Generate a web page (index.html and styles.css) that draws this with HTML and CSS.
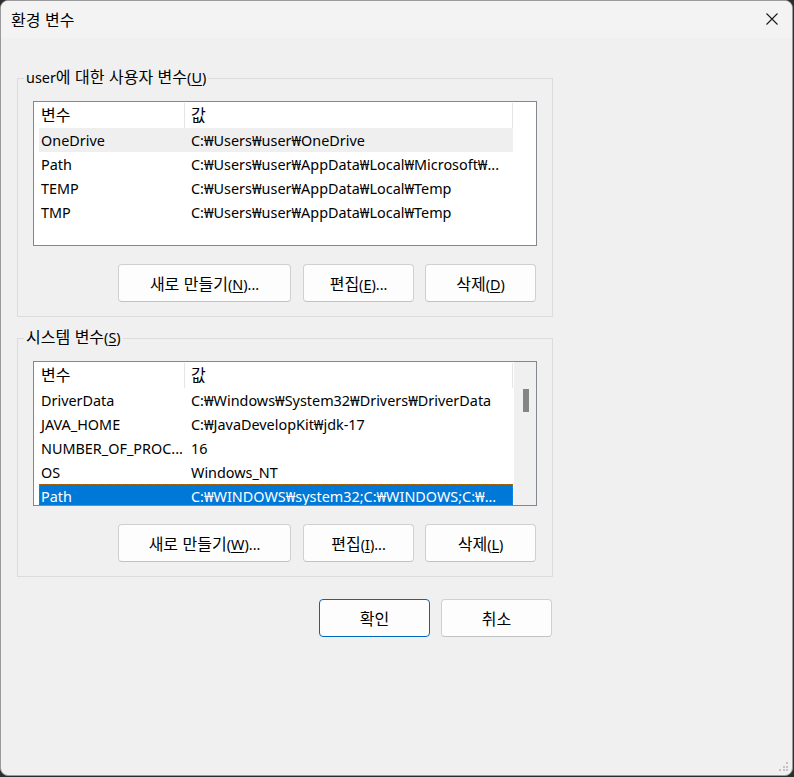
FILE: index.html
```html
<!DOCTYPE html>
<html lang="ko">

<head>
    <meta charset="UTF-8">
    <meta name="viewport" content="width=device-width, initial-scale=1.0">
    <title>환경 변수</title>
    <link rel="stylesheet" href="styles.css">
</head>

<body>
    <div class="window">
        <div class="titlebar">
            <span class="title ko">환경 변수</span>
            <svg class="close-icon" width="12" height="12" viewBox="0 0 12 12">
                <path d="M0.5 0.5 L11.5 11.5 M11.5 0.5 L0.5 11.5" stroke="#1a1a1a" stroke-width="1.1" fill="none" />
            </svg>
        </div>

        <div class="content">
            <fieldset class="group">
                <legend>user<span class="ko">에 대한 사용자 변수</span>(<u>U</u>)</legend>
                <div class="listview">
                    <div class="lv-main">
                        <div class="lv-header">
                            <div class="lv-cell ko">변수</div>
                            <div class="lv-cell ko">값</div>
                        </div>
                        <div class="lv-row hover">
                            <div class="lv-cell">OneDrive</div>
                            <div class="lv-cell">C:₩Users₩user₩OneDrive</div>
                        </div>
                        <div class="lv-row">
                            <div class="lv-cell">Path</div>
                            <div class="lv-cell">C:₩Users₩user₩AppData₩Local₩Microsoft₩...</div>
                        </div>
                        <div class="lv-row">
                            <div class="lv-cell">TEMP</div>
                            <div class="lv-cell">C:₩Users₩user₩AppData₩Local₩Temp</div>
                        </div>
                        <div class="lv-row">
                            <div class="lv-cell">TMP</div>
                            <div class="lv-cell">C:₩Users₩user₩AppData₩Local₩Temp</div>
                        </div>
                    </div>
                </div>
                <div class="btn-row">
                    <button class="btn btn-wide"><span class="ko">새로 만들기</span>(<u>N</u>)...</button>
                    <button class="btn"><span class="ko">편집</span>(<u>E</u>)...</button>
                    <button class="btn"><span class="ko">삭제</span>(<u>D</u>)</button>
                </div>
            </fieldset>

            <fieldset class="group">
                <legend><span class="ko">시스템 변수</span>(<u>S</u>)</legend>
                <div class="listview">
                    <div class="lv-main">
                        <div class="lv-header">
                            <div class="lv-cell ko">변수</div>
                            <div class="lv-cell ko">값</div>
                        </div>
                        <div class="lv-row">
                            <div class="lv-cell">DriverData</div>
                            <div class="lv-cell">C:₩Windows₩System32₩Drivers₩DriverData</div>
                        </div>
                        <div class="lv-row">
                            <div class="lv-cell">JAVA_HOME</div>
                            <div class="lv-cell">C:₩JavaDevelopKit₩jdk-17</div>
                        </div>
                        <div class="lv-row">
                            <div class="lv-cell">NUMBER_OF_PROC...</div>
                            <div class="lv-cell">16</div>
                        </div>
                        <div class="lv-row">
                            <div class="lv-cell">OS</div>
                            <div class="lv-cell">Windows_NT</div>
                        </div>
                        <div class="lv-row selected">
                            <div class="lv-cell">Path</div>
                            <div class="lv-cell">C:₩WINDOWS₩system32;C:₩WINDOWS;C:₩...</div>
                        </div>
                    </div>
                    <div class="scrollbar">
                        <div class="thumb"></div>
                    </div>
                </div>
                <div class="btn-row">
                    <button class="btn btn-wide"><span class="ko">새로 만들기</span>(<u>W</u>)...</button>
                    <button class="btn"><span class="ko">편집</span>(<u>I</u>)...</button>
                    <button class="btn"><span class="ko">삭제</span>(<u>L</u>)</button>
                </div>
            </fieldset>

            <div class="dialog-buttons">
                <button class="btn btn-default"><span class="ko">확인</span></button>
                <button class="btn"><span class="ko">취소</span></button>
            </div>
        </div>

        <div class="grip">
            <span></span><span></span><span></span><span></span><span></span><span></span>
        </div>
    </div>
</body>

</html>
```

FILE: styles.css
```css
html {
    background-color: #2d2d2d;
}

body {
    margin: 0;
    font-family: "Noto Sans", "Noto Sans CJK KR", sans-serif;
    font-size: 14.4px;
    color: #000;
}

.ko {
    font-family: "Noto Sans CJK KR", sans-serif;
    font-size: 16px;
}

.window {
    position: relative;
    width: 793px;
    height: 776px;
    box-sizing: border-box;
    background-color: #f0f0f0;
    border: 1px solid #9a9a9a;
    border-radius: 8px;
    overflow: hidden;
}

.titlebar {
    height: 37px;
    background-color: #f3f3f3;
    display: flex;
    align-items: center;
    justify-content: space-between;
    padding: 0 14px 0 10px;
}

.title {
    line-height: 20px;
    margin-top: -2px;
}

.close-icon {
    margin-top: -1px;
}

.content {
    padding: 30px 0 0 16px;
}

.group {
    margin: 0 0 11px 0;
    padding: 0 15px 14px;
    width: 536px;
    box-sizing: border-box;
    border: 1px solid #dcdcdc;
    min-width: 0;
}

.group legend {
    margin-left: -9px;
    padding: 0 2px;
    height: 20px;
    line-height: 20px;
    white-space: nowrap;
}

.group legend .ko {
    line-height: 1;
}

u {
    text-decoration-thickness: 1px;
    text-underline-offset: 2px;
}

/* list view */
.listview {
    margin-top: 13px;
    width: 504px;
    height: 145px;
    box-sizing: border-box;
    border: 1px solid #828790;
    background-color: #fff;
    display: flex;
    overflow: hidden;
}

.lv-main {
    padding-left: 5px;
}

.lv-header,
.lv-row {
    display: grid;
    grid-template-columns: 146px 328px;
    white-space: nowrap;
}

.lv-header {
    height: 26px;
}

.lv-header .lv-cell {
    border-right: 1px solid #e5e5e5;
    margin: 1px 0 0;
    line-height: 22px;
}

.lv-row {
    height: 24px;
    line-height: 25px;
}

.lv-cell {
    overflow: hidden;
    padding-left: 2px;
}

.lv-cell + .lv-cell {
    padding-left: 6px;
}

.lv-row.hover {
    background-color: #efefef;
}

.lv-row.selected {
    background-color: #0078d7;
    color: #fff;
    outline: 1px dotted #b06a10;
    outline-offset: -1px;
}

.scrollbar {
    margin-left: 1px;
    width: 22px;
    background-color: #f0f0f0;
    padding-top: 27px;
    display: flex;
    justify-content: center;
}

.thumb {
    width: 6px;
    height: 23px;
    margin-left: 1px;
    background-color: #858585;
}

/* buttons */
.btn-row {
    margin-top: 18px;
    width: 503px;
    display: flex;
    justify-content: flex-end;
    gap: 11px;
}

.btn {
    width: 111px;
    height: 38px;
    font-family: inherit;
    font-size: 14.4px;
    color: #000;
    background-color: #fdfdfd;
    border: 1px solid #d0d0d0;
    border-bottom-color: #c2c2c2;
    border-radius: 4px;
    padding: 0;
}

.btn-row .btn-wide {
    width: 173px;
    margin-right: 1px;
}

.dialog-buttons {
    margin-top: 22px;
    width: 535px;
    display: flex;
    justify-content: flex-end;
    gap: 11px;
}

.btn-default {
    border-color: #0067c0;
}

/* resize grip */
.grip {
    position: absolute;
    right: 4px;
    bottom: 4px;
    width: 9px;
    height: 9px;
    display: grid;
    grid-template-columns: repeat(3, 2px);
    grid-template-rows: repeat(3, 2px);
    gap: 1.5px;
}

.grip span {
    background-color: #c4c4c4;
}

.grip span:nth-child(1) {
    grid-column: 3;
    grid-row: 1;
}

.grip span:nth-child(2) {
    grid-column: 2;
    grid-row: 2;
}

.grip span:nth-child(3) {
    grid-column: 3;
    grid-row: 2;
}

.grip span:nth-child(4) {
    grid-column: 1;
    grid-row: 3;
}

.grip span:nth-child(5) {
    grid-column: 2;
    grid-row: 3;
}

.grip span:nth-child(6) {
    grid-column: 3;
    grid-row: 3;
}
```
